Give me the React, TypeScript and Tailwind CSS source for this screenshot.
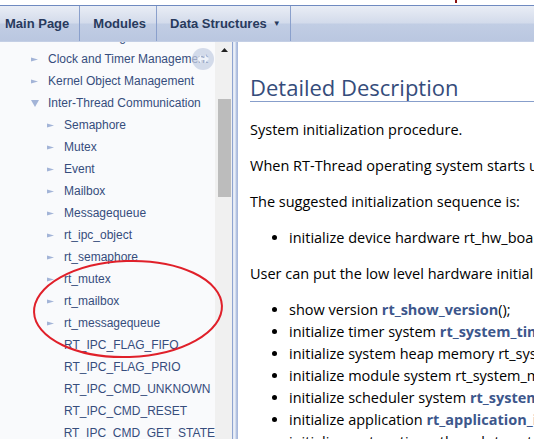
import React from 'react';

type Node = { label: string; level: 1 | 2; arrow: 'right' | 'down' | null };

const tree: Node[] = [
  { label: 'Thread Management', level: 1, arrow: 'right' },
  { label: 'Clock and Timer Management', level: 1, arrow: 'right' },
  { label: 'Kernel Object Management', level: 1, arrow: 'right' },
  { label: 'Inter-Thread Communication', level: 1, arrow: 'down' },
  { label: 'Semaphore', level: 2, arrow: 'right' },
  { label: 'Mutex', level: 2, arrow: 'right' },
  { label: 'Event', level: 2, arrow: 'right' },
  { label: 'Mailbox', level: 2, arrow: 'right' },
  { label: 'Messagequeue', level: 2, arrow: 'right' },
  { label: 'rt_ipc_object', level: 2, arrow: 'right' },
  { label: 'rt_semaphore', level: 2, arrow: 'right' },
  { label: 'rt_mutex', level: 2, arrow: 'right' },
  { label: 'rt_mailbox', level: 2, arrow: 'right' },
  { label: 'rt_messagequeue', level: 2, arrow: 'right' },
  { label: 'RT_IPC_FLAG_FIFO', level: 2, arrow: null },
  { label: 'RT_IPC_FLAG_PRIO', level: 2, arrow: null },
  { label: 'RT_IPC_CMD_UNKNOWN', level: 2, arrow: null },
  { label: 'RT_IPC_CMD_RESET', level: 2, arrow: null },
  { label: 'RT_IPC_CMD_GET_STATE', level: 2, arrow: null },
];

// init steps: [before, code, bold?, after]
const steps: [string, string, boolean, string][] = [
  ['show version ', 'rt_show_version', true, '();'],
  ['initialize timer system ', 'rt_system_timer_init', true, '();'],
  ['initialize system heap memory ', 'rt_system_heap_init(__bss_end, __end_of_memory);', false, ''],
  ['initialize module system ', 'rt_system_module_init();', false, ''],
  ['initialize scheduler system ', 'rt_system_scheduler_init', true, '();'],
  ['initialize application ', 'rt_application_init', true, '();'],
  ['initialize system timer thread ', 'rt_system_timer_thread_init();', false, ''],
];

function Arrow({ dir }: { dir: 'right' | 'down' }) {
  if (dir === 'down') {
    return (
      <svg width="8" height="7" viewBox="0 0 8 7" className="shrink-0">
        <path d="M0 0 H8 L4 7 Z" fill="#a3b4d7" />
      </svg>
    );
  }
  return (
    <svg width="7" height="5" viewBox="0 0 7 5" className="shrink-0">
      <path d="M0 0.5 L7 2.5 L0 4.5 Z" fill="#a3b4d7" />
    </svg>
  );
}

function Tab({ children, arrow, first }: { children: React.ReactNode; arrow?: boolean; first?: boolean }) {
  return (
    <div className={`flex items-center h-full border-r border-[#8aa0cc] text-[13px] font-bold text-[#283a5d] ${first ? 'pl-[5px]' : 'pl-[13px]'} ${arrow ? 'pr-[9px]' : 'pr-[10px]'}`}>
      {children}
      {arrow && <span className="ml-[6px] text-[8px] text-[#283a5d]">▼</span>}
    </div>
  );
}

export default function App() {
  return (
    <div className="relative w-[534px] h-[439px] overflow-hidden bg-white flex flex-col" style={{ fontFamily: '"Liberation Sans", Arial, sans-serif' }}>
      {/* top strip */}
      <div className="h-[5px] shrink-0 bg-white" />
      <div className="absolute left-[455px] top-0 w-[2px] h-[3px] bg-[#8b1010]" />

      {/* nav bar */}
      <div className="h-[37px] shrink-0 flex border-t border-[#6f8ac0] border-b border-b-[#c4cfe5] bg-[linear-gradient(#e9edf5_0%,#d3dbeb_48%,#c1cde4_52%,#bac7e0_100%)]">
        <Tab first>Main Page</Tab>
        <Tab>Modules</Tab>
        <Tab arrow>Data Structures</Tab>
      </div>

      <div className="flex flex-1 min-h-0">
        {/* side nav */}
        <div className="relative w-[215px] shrink-0 bg-[#f9fafc] overflow-hidden">
          <div className="mt-[-16px] flex flex-col">
            {tree.map((n) => (
              <div
                key={n.label}
                className={`h-[22px] flex items-center whitespace-nowrap text-[12px] text-[#364d7c] ${n.level === 1 ? 'pl-[31px]' : 'pl-[47px]'}`}
              >
                <div className="w-[17px] flex items-center">{n.arrow && <Arrow dir={n.arrow} />}</div>
                <span>{n.label}</span>
              </div>
            ))}
          </div>
          {/* sync button */}
          <div className="absolute left-[192px] top-[6px] w-[22px] h-[22px] rounded-full bg-[#c3cde3]/70 flex items-center justify-center">
            <svg width="14" height="10" viewBox="0 0 14 10">
              <path d="M1 5 L5 1 V4 H9 V1 L13 5 L9 9 V6 H5 V9 Z" fill="#eef2f9" />
            </svg>
          </div>
        </div>

        {/* scrollbar */}
        <div className="w-[17px] shrink-0 bg-[#f0f0f0] flex flex-col items-center pl-[2px]">
          <div className="h-[16px] flex items-center justify-center">
            <svg width="7" height="4" viewBox="0 0 7 4">
              <path d="M0 4 L3.5 0 L7 4 Z" fill="#222" />
            </svg>
          </div>
          <div className="mt-[41px] w-[13px] h-[98px] bg-[#bcbcbc]" />
        </div>

        {/* splitter */}
        <div className="w-[6px] shrink-0 bg-[linear-gradient(90deg,#8ea4d0_0px,#8ea4d0_1px,#dfe6f3_1px,#eef2f9_3px,#b9c7e3_4px,#a3b5da_6px)]" />

        {/* content */}
        <div className="flex-1 min-w-0 overflow-hidden pl-[12px] whitespace-nowrap text-black" style={{ fontFamily: '"Open Sans", "Noto Sans", sans-serif' }}>
          <div className="mt-[31px] border-b border-[#879ecb] text-[22px] leading-[28px] text-[#354c7b]">Detailed Description</div>
          <div className="text-[14.5px]">
            <p className="mt-[17px] leading-[22px]">System initialization procedure.</p>
            <p className="mt-[14px] leading-[22px]">When RT-Thread operating system starts up, the basic initialization procedure is:</p>
            <p className="mt-[14px] leading-[22px]">The suggested initialization sequence is:</p>
            <ul className="mt-[14px] pl-[39px] list-disc">
              <li className="leading-[22px]">initialize device hardware rt_hw_board_init();</li>
            </ul>
            <p className="mt-[14px] leading-[22px]">User can put the low level hardware initialization in this function.</p>
            <ul className="mt-[14px] pl-[39px] list-disc">
              {steps.map(([a, code, bold, after]) => (
                <li key={a} className="leading-[22px]">
                  {a}
                  {bold ? <b className="text-[#3d578c]">{code}</b> : code}
                  {after}
                </li>
              ))}
            </ul>
          </div>
        </div>
      </div>

      {/* red annotation ellipse */}
      <svg className="absolute left-0 top-0 pointer-events-none" width="534" height="439">
        <ellipse cx="128" cy="309" rx="94" ry="48" fill="none" stroke="#e0202a" strokeWidth="2" transform="rotate(-2 128 309)" />
      </svg>
    </div>
  );
}
